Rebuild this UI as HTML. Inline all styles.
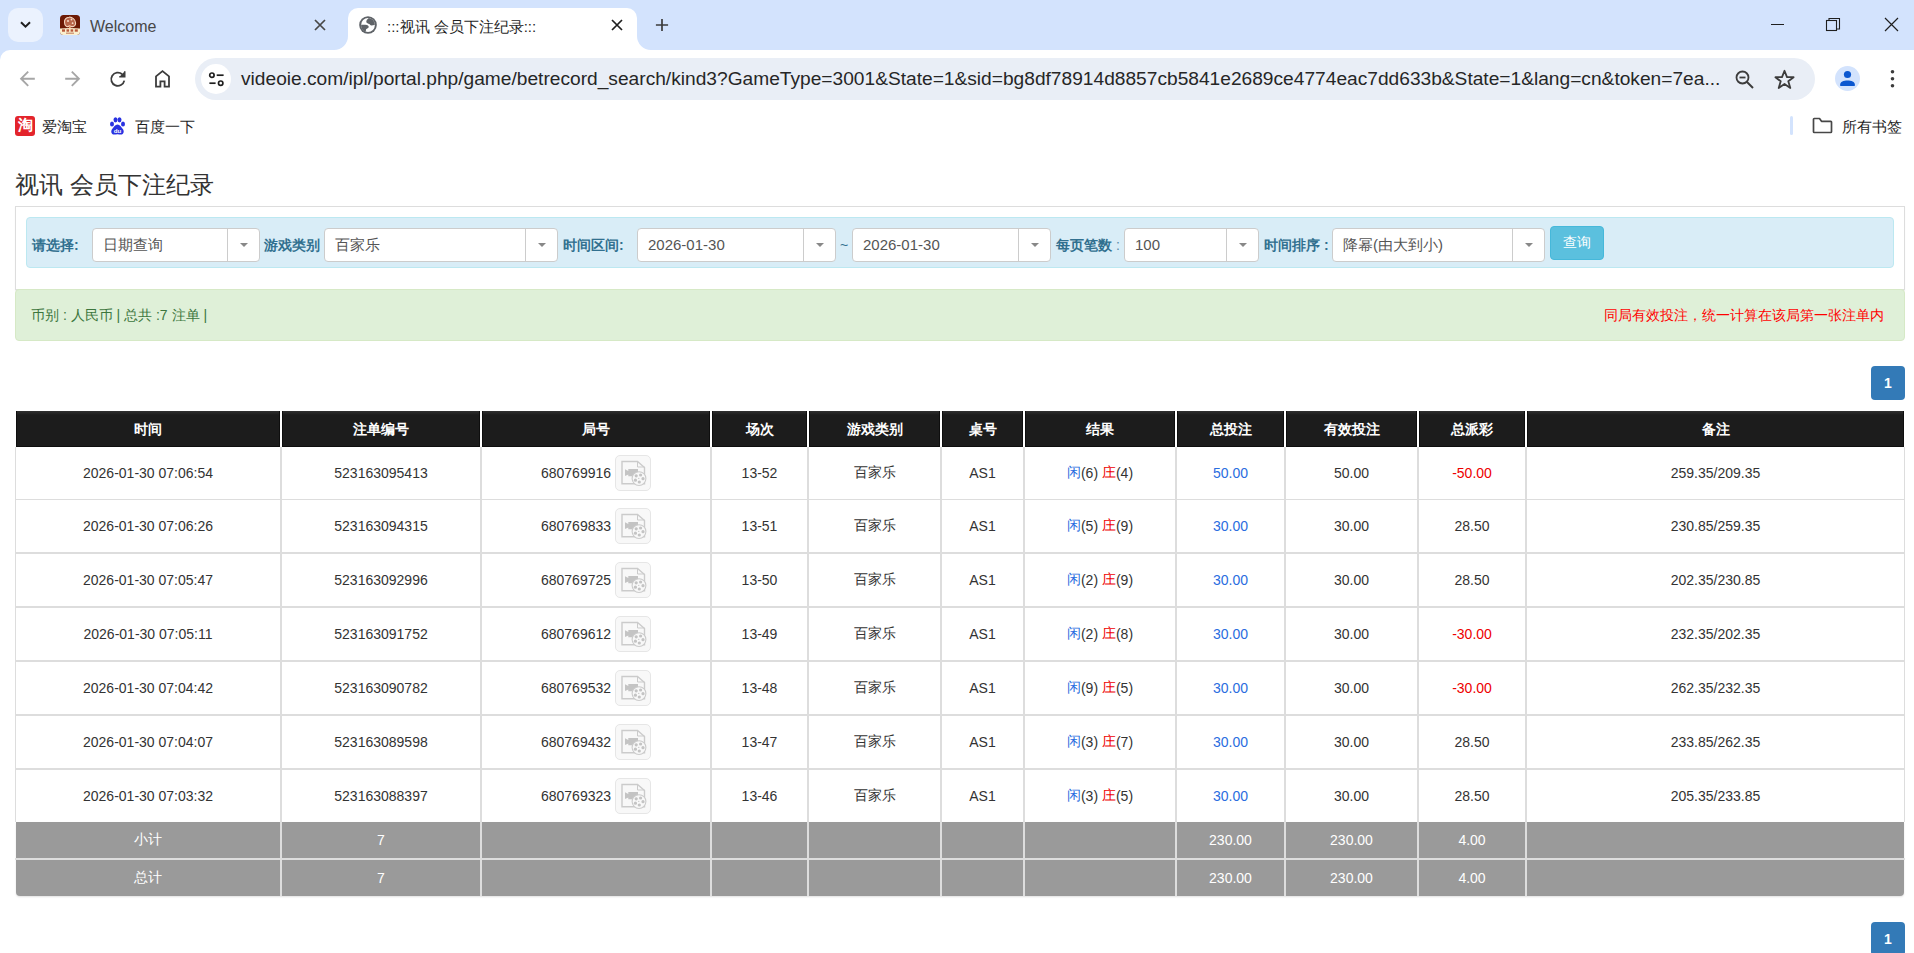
<!DOCTYPE html><html><head><meta charset="utf-8"><style>
*{box-sizing:border-box;margin:0;padding:0}
html,body{width:1914px;height:953px;overflow:hidden;background:#fff;font-family:"Liberation Sans",sans-serif;color:#333}
.a{position:absolute}
.c{position:absolute;display:flex;align-items:center;justify-content:center;white-space:nowrap}
.ui{color:#1f1f1f;white-space:nowrap}
.sel{position:absolute;background:#fff;border:1px solid #ccc;border-radius:4px;height:34px;top:228px}
.sel .t{position:absolute;left:10px;top:7px;font-size:15px;color:#555;white-space:nowrap}
.sel .d{position:absolute;top:0;bottom:0;width:1px;background:#ccc}
.sel .ar{position:absolute;top:14px;width:0;height:0;border-left:4px solid transparent;border-right:4px solid transparent;border-top:4px solid #888}
.lb{position:absolute;top:236.5px;font-size:14px;font-weight:bold;color:#31708f;white-space:nowrap}
.hd{position:absolute;top:411px;height:36px;background:linear-gradient(#303030 0,#1c1c1c 4px,#1c1c1c 100%);color:#fff;font-weight:bold;font-size:14px;display:flex;align-items:center;justify-content:center;padding-top:2px;box-shadow:inset 1px 0 0 #0e0e0e,inset -1px 0 0 #0e0e0e,inset 0 -1px 0 #0e0e0e}
.cell{position:absolute;display:flex;align-items:center;justify-content:center;font-size:14px;color:#333;white-space:nowrap}
.cell>span{display:inline-flex;align-items:center;white-space:pre}
.ft{position:absolute;display:flex;align-items:center;justify-content:center;font-size:14px;color:#fff;white-space:nowrap}
.blue{color:#2a6de0}
.red{color:#e00}
.ico{display:inline-block;width:36px;height:36px;border:1px solid #e6e6e6;border-radius:5px;background:#f8f8f8;margin-left:4px;position:relative}
</style></head><body>
<div class="a" style="left:0;top:0;width:1914px;height:64px;background:#d3e3fd"></div>
<div class="a" style="left:8px;top:8px;width:35px;height:34px;border-radius:10px;background:#ebf2fe"></div>
<svg class="a" style="left:17px;top:16px" width="17" height="17" viewBox="0 0 17 17"><path d="M4 6.2 L8.5 10.7 L13 6.2" fill="none" stroke="#1f1f1f" stroke-width="2"/></svg>
<svg class="a" style="left:60px;top:15px" width="20" height="20" viewBox="0 0 20 20"><defs><clipPath id="fc"><rect x="0" y="0" width="20" height="20" rx="3.5"/></clipPath></defs><g clip-path="url(#fc)"><rect x="0" y="0" width="20" height="20" fill="#6c1a05"/><path d="M0 13.6Q10 12.6 20 13.6V20H0Z" fill="#fbf0cf"/><rect x="2" y="14.3" width="3" height="2.4" fill="#b85a3c"/><rect x="6.5" y="14.3" width="2.6" height="2.4" fill="#b85a3c"/><rect x="10.6" y="14.3" width="2.6" height="2.4" fill="#b85a3c"/><rect x="14.8" y="14.3" width="3" height="2.4" fill="#b85a3c"/><rect x="6" y="17.6" width="8" height="1.2" fill="#c98a6a"/><path d="M4.5 7.5C4.2 4.8 6 2.5 9 2.2C12 1.8 15.5 4.5 15.6 8C15.7 10.5 13.8 12 11.5 11.6C10.5 11.4 10 11 9.6 10.8C8.5 11.6 6.8 11.8 5.8 10.9C5 10.2 4.6 9 4.5 7.5Z" fill="#b8664a" stroke="#f2d3bd" stroke-width="1.1"/><circle cx="8" cy="6" r="1" fill="#f5dccb"/><circle cx="11.5" cy="4.5" r="0.9" fill="#f5dccb"/><circle cx="12.6" cy="8.2" r="0.9" fill="#f5dccb"/><path d="M9.3 11L10.3 11L11 13.2H8.6Z" fill="#eea97c"/></g></svg>
<div class="a ui" style="left:90px;top:18px;font-size:16px;color:#474747">Welcome</div>
<svg class="a" style="left:313px;top:18px" width="14" height="14" viewBox="0 0 14 14"><path d="M2 2L12 12M12 2L2 12" stroke="#474747" stroke-width="1.7"/></svg>
<div class="a" style="left:348px;top:8px;width:289px;height:42px;background:#fff;border-radius:10px 10px 0 0"></div>
<svg class="a" style="left:334px;top:36px" width="14" height="14" viewBox="0 0 14 14"><path d="M0 14 A14 14 0 0 0 14 0 L14 14 Z" fill="#fff"/></svg>
<svg class="a" style="left:637px;top:36px" width="14" height="14" viewBox="0 0 14 14"><path d="M14 14 A14 14 0 0 1 0 0 L0 14 Z" fill="#fff"/></svg>
<svg class="a" style="left:359px;top:16px" width="18" height="18" viewBox="0 0 18 18"><circle cx="9" cy="9" r="8.8" fill="#5f6368"/><circle cx="9" cy="9" r="6.9" fill="#fff"/><path d="M9.8 2.1C8.3 3.2 7.2 4.6 7.3 6C7.5 7.3 9.3 7.4 10.3 8.1C11.2 8.8 11.3 9.6 12.4 9.6C13.6 9.6 14.7 9.1 15.9 8.8A6.9 6.9 0 0 0 9.8 2.1Z" fill="#5f6368"/><path d="M2.1 8.8C4 8.6 6.2 8.6 8 9.1C9.4 9.5 9.9 10.5 9.6 11.4C9.2 12.3 7.3 12.3 7 13.5C6.8 14.4 6.9 15.1 7 15.7A6.9 6.9 0 0 1 2.1 8.8Z" fill="#5f6368"/></svg>
<div class="a ui" style="left:387px;top:17.5px;font-size:15px;color:#1f1f1f">:::视讯 会员下注纪录:::</div>
<svg class="a" style="left:610px;top:18px" width="14" height="14" viewBox="0 0 14 14"><path d="M2 2L12 12M12 2L2 12" stroke="#1f1f1f" stroke-width="1.7"/></svg>
<svg class="a" style="left:653px;top:16px" width="18" height="18" viewBox="0 0 18 18"><path d="M9 2.9V15.1M2.9 9H15.1" stroke="#3c3c3c" stroke-width="1.7"/></svg>
<div class="a" style="left:1771px;top:24px;width:13px;height:1px;background:#1f1f1f"></div>
<svg class="a" style="left:1825px;top:17px" width="16" height="16" viewBox="0 0 16 16"><rect x="1.5" y="3.5" width="10" height="10" fill="none" stroke="#1f1f1f" stroke-width="1.1"/><path d="M4 3.5V1.5H14.5V12H11.5" fill="none" stroke="#1f1f1f" stroke-width="1.1"/></svg>
<svg class="a" style="left:1884px;top:17px" width="15" height="15" viewBox="0 0 15 15"><path d="M1 1L14 14M14 1L1 14" stroke="#1f1f1f" stroke-width="1.2"/></svg>
<div class="a" style="left:0;top:50px;width:1914px;height:98px;background:#fff;border-top-left-radius:10px"></div>
<svg class="a" style="left:19px;top:70px" width="17" height="17" viewBox="0 0 17 17"><path d="M15.8 8.7H2.6M9.2 1.6L2.1 8.7L9.2 15.8" fill="none" stroke="#a6a6a6" stroke-width="1.9"/></svg>
<svg class="a" style="left:64px;top:70px" width="17" height="17" viewBox="0 0 17 17"><path d="M1.2 8.7H14.4M7.8 1.6L14.9 8.7L7.8 15.8" fill="none" stroke="#a6a6a6" stroke-width="1.9"/></svg>
<svg class="a" style="left:109px;top:70px" width="18" height="18" viewBox="0 0 18 18"><path d="M15.3 10.6A6.6 6.6 0 1 1 13.2 4.3" fill="none" stroke="#3c3c3c" stroke-width="1.8"/><path d="M15.8 1.2V6.9H10.2Z" fill="#3c3c3c"/><path d="M15.8 1.2V6.9H10.2" fill="none" stroke="#3c3c3c" stroke-width="1.4"/></svg>
<svg class="a" style="left:154px;top:69px" width="17" height="19" viewBox="0 0 17 19"><path d="M2 17.7V7.4L8.5 2.1L15 7.4V17.7H10.6V12.3H6.4V17.7Z" fill="none" stroke="#3c3c3c" stroke-width="1.8" stroke-linejoin="miter"/></svg>
<div class="a" style="left:195px;top:58px;width:1620px;height:42px;border-radius:21px;background:#e9eef6"></div>
<div class="a" style="left:201px;top:64px;width:30px;height:30px;border-radius:15px;background:#fff"></div>
<svg class="a" style="left:207px;top:71px" width="18" height="17" viewBox="0 0 18 17"><circle cx="4.9" cy="4.2" r="2.2" fill="none" stroke="#1f1f1f" stroke-width="1.7"/><path d="M9.7 4.2H16.6" stroke="#1f1f1f" stroke-width="1.7"/><circle cx="13.7" cy="12.2" r="2.2" fill="none" stroke="#1f1f1f" stroke-width="1.7"/><path d="M2.4 12.2H8.6" stroke="#1f1f1f" stroke-width="1.7"/></svg>
<div class="a ui" style="left:241px;top:68px;font-size:19.17px;color:#262626;line-height:22px">videoie.com/ipl/portal.php/game/betrecord_search/kind3?GameType=3001&amp;State=1&amp;sid=bg8df78914d8857cb5841e2689ce4774eac7dd633b&amp;State=1&amp;lang=cn&amp;token=7ea...</div>
<svg class="a" style="left:1735px;top:70px" width="20" height="20" viewBox="0 0 20 20"><circle cx="7.5" cy="7.5" r="6" fill="none" stroke="#3c3c3c" stroke-width="1.8"/><path d="M4.5 7.5H10.5" stroke="#3c3c3c" stroke-width="1.8"/><path d="M12 12L18 18" stroke="#3c3c3c" stroke-width="2"/></svg>
<svg class="a" style="left:1774px;top:69px" width="21" height="21" viewBox="0 0 21 21"><path d="M10.5 1.8L13 8.2H19.6L14.3 12.3L16.3 19L10.5 15L4.7 19L6.7 12.3L1.4 8.2H8Z" fill="none" stroke="#3c3c3c" stroke-width="1.8" stroke-linejoin="round"/></svg>
<div class="a" style="left:1835px;top:66px;width:25px;height:25px;border-radius:13px;background:#d3e3fd"></div>
<svg class="a" style="left:1838px;top:69px" width="19" height="19" viewBox="0 0 19 19"><circle cx="9.5" cy="5.5" r="3.6" fill="#0b57d0"/><path d="M2.2 16.9V15.2C2.2 12.8 5.5 11.4 9.5 11.4C13.5 11.4 16.8 12.8 16.8 15.2V16.9Z" fill="#0b57d0"/></svg>
<svg class="a" style="left:1889px;top:69px" width="7" height="20" viewBox="0 0 7 20"><circle cx="3.5" cy="2.8" r="1.8" fill="#3c3c3c"/><circle cx="3.5" cy="9.8" r="1.8" fill="#3c3c3c"/><circle cx="3.5" cy="16.8" r="1.8" fill="#3c3c3c"/></svg>
<div class="a" style="left:15px;top:116px;width:20px;height:20px;border-radius:3px;background:#e3242b"></div>
<div class="a" style="left:15px;top:114px;width:20px;height:20px;font-size:15px;font-weight:bold;color:#fff;text-align:center;line-height:22px">淘</div>
<div class="a ui" style="left:42px;top:118px;font-size:15px;line-height:18px;color:#1f1f1f">爱淘宝</div>
<svg class="a" style="left:109px;top:117px" width="17" height="18" viewBox="0 0 17 18"><ellipse cx="3" cy="7" rx="2" ry="2.6" fill="#2932e1"/><ellipse cx="6.5" cy="2.8" rx="2" ry="2.6" fill="#2932e1"/><ellipse cx="10.5" cy="2.8" rx="2" ry="2.6" fill="#2932e1"/><ellipse cx="14" cy="7" rx="2" ry="2.6" fill="#2932e1"/><path d="M8.5 7.6C6.2 7.6 4.8 10.2 3.2 12C1.6 13.8 2 17.6 5.2 17.6C7 17.6 7.6 17.2 8.5 17.2C9.4 17.2 10 17.6 11.8 17.6C15 17.6 15.4 13.8 13.8 12C12.2 10.2 10.8 7.6 8.5 7.6Z" fill="#2932e1"/><text x="8.6" y="15.6" font-family="Liberation Sans" font-size="6.2" font-weight="bold" fill="#fff" text-anchor="middle">du</text></svg>
<div class="a ui" style="left:135px;top:118px;font-size:15px;line-height:18px;color:#1f1f1f">百度一下</div>
<div class="a" style="left:1790px;top:116px;width:3px;height:19px;border-radius:1.5px;background:#d3e3fd"></div>
<svg class="a" style="left:1812px;top:117px" width="21" height="17" viewBox="0 0 21 17"><path d="M2.2 1.5H7.5L9.5 4.3H18.8Q19.5 4.3 19.5 5V14.8Q19.5 15.5 18.8 15.5H2.2Q1.5 15.5 1.5 14.8V2.2Q1.5 1.5 2.2 1.5Z" fill="none" stroke="#474747" stroke-width="1.7" stroke-linejoin="round"/></svg>
<div class="a ui" style="left:1842px;top:118px;font-size:15px;line-height:18px;color:#1f1f1f">所有书签</div>
<div class="a" style="left:15px;top:170.5px;font-size:24px;line-height:28px;color:#333;white-space:nowrap">视讯 会员下注纪录</div>
<div class="a" style="left:15px;top:206px;width:1890px;height:84px;border:1px solid #ddd;background:#fff;box-shadow:0 1px 1px rgba(0,0,0,.05)"></div>
<div class="a" style="left:26px;top:217px;width:1868px;height:51px;border:1px solid #bce8f1;border-radius:4px;background:#d9edf7"></div>
<div class="lb" style="left:32px">请选择:</div>
<div class="lb" style="left:264px">游戏类别</div>
<div class="lb" style="left:563px">时间区间:</div>
<div class="lb" style="left:1056px">每页笔数<span style="font-weight:normal;color:#5a8aa6"> :</span></div>
<div class="lb" style="left:1264px">时间排序 :</div>
<div class="lb" style="left:840px;top:237px;font-weight:normal">~</div>
<div class="sel" style="left:92px;width:168px"><div class="t">日期查询</div><div class="d" style="left:134px"></div><div class="ar" style="left:147px"></div></div>
<div class="sel" style="left:324px;width:234px"><div class="t">百家乐</div><div class="d" style="left:200px"></div><div class="ar" style="left:213px"></div></div>
<div class="sel" style="left:637px;width:199px"><div class="t">2026-01-30</div><div class="d" style="left:165px"></div><div class="ar" style="left:178px"></div></div>
<div class="sel" style="left:852px;width:199px"><div class="t">2026-01-30</div><div class="d" style="left:165px"></div><div class="ar" style="left:178px"></div></div>
<div class="sel" style="left:1124px;width:135px"><div class="t">100</div><div class="d" style="left:101px"></div><div class="ar" style="left:114px"></div></div>
<div class="sel" style="left:1332px;width:213px"><div class="t">降幂(由大到小)</div><div class="d" style="left:179px"></div><div class="ar" style="left:192px"></div></div>
<div class="a" style="left:1550px;top:226px;width:54px;height:34px;border:1px solid #46b8da;border-radius:4px;background:#5bc0de;color:#fff;font-size:14px;display:flex;align-items:center;justify-content:center">查询</div>
<div class="a" style="left:15px;top:289px;width:1890px;height:52px;border:1px solid #d6e9c6;border-radius:4px;background:#dff0d8"></div>
<div class="a" style="left:31px;top:306px;font-size:14px;line-height:18px;color:#3c763d;white-space:nowrap">币别 : 人民币 | 总共 :7 注单 |</div>
<div class="a" style="left:1604px;top:306px;font-size:14px;line-height:18px;color:#f00;white-space:nowrap">同局有效投注，统一计算在该局第一张注单内</div>
<div class="a" style="left:1871px;top:366px;width:34px;height:34px;border-radius:4px;background:#337ab7;color:#fff;font-size:14px;font-weight:bold;display:flex;align-items:center;justify-content:center">1</div>
<div class="a" style="left:1871px;top:922px;width:34px;height:34px;border-radius:4px;background:#337ab7;color:#fff;font-size:14px;font-weight:bold;display:flex;align-items:center;justify-content:center">1</div>
<div class="a" style="left:15px;top:447px;width:1890px;height:375px;background:#fff;border-left:1px solid #ddd;border-right:1px solid #ddd"></div>
<div class="hd" style="left:16px;width:264px">时间</div>
<div class="hd" style="left:282px;width:198px">注单编号</div>
<div class="hd" style="left:482px;width:228px">局号</div>
<div class="hd" style="left:712px;width:95px">场次</div>
<div class="hd" style="left:809px;width:131px">游戏类别</div>
<div class="hd" style="left:942px;width:81px">桌号</div>
<div class="hd" style="left:1025px;width:150px">结果</div>
<div class="hd" style="left:1177px;width:107px">总投注</div>
<div class="hd" style="left:1286px;width:131px">有效投注</div>
<div class="hd" style="left:1419px;width:106px">总派彩</div>
<div class="hd" style="left:1527px;width:377px">备注</div>
<div class="a" style="left:15px;top:499px;width:1890px;height:1px;background:#ddd"></div>
<div class="a" style="left:15px;top:552px;width:1890px;height:2px;background:#ddd"></div>
<div class="a" style="left:15px;top:606px;width:1890px;height:2px;background:#ddd"></div>
<div class="a" style="left:15px;top:660px;width:1890px;height:2px;background:#ddd"></div>
<div class="a" style="left:15px;top:714px;width:1890px;height:2px;background:#ddd"></div>
<div class="a" style="left:15px;top:768px;width:1890px;height:2px;background:#ddd"></div>
<div class="a" style="left:280px;top:447px;width:2px;height:375px;background:#ddd"></div>
<div class="a" style="left:480px;top:447px;width:2px;height:375px;background:#ddd"></div>
<div class="a" style="left:710px;top:447px;width:2px;height:375px;background:#ddd"></div>
<div class="a" style="left:807px;top:447px;width:2px;height:375px;background:#ddd"></div>
<div class="a" style="left:940px;top:447px;width:2px;height:375px;background:#ddd"></div>
<div class="a" style="left:1023px;top:447px;width:2px;height:375px;background:#ddd"></div>
<div class="a" style="left:1175px;top:447px;width:2px;height:375px;background:#ddd"></div>
<div class="a" style="left:1284px;top:447px;width:2px;height:375px;background:#ddd"></div>
<div class="a" style="left:1417px;top:447px;width:2px;height:375px;background:#ddd"></div>
<div class="a" style="left:1525px;top:447px;width:2px;height:375px;background:#ddd"></div>
<div class="a" style="left:16px;top:822px;width:1888px;height:74px;background:#9a9a9a;border-radius:0 0 4px 4px;box-shadow:0 1px 2px rgba(0,0,0,.12)"></div>
<div class="a" style="left:15px;top:858px;width:1890px;height:2px;background:#ddd"></div>
<div class="a" style="left:280px;top:822px;width:2px;height:74px;background:#ddd"></div>
<div class="a" style="left:480px;top:822px;width:2px;height:74px;background:#ddd"></div>
<div class="a" style="left:710px;top:822px;width:2px;height:74px;background:#ddd"></div>
<div class="a" style="left:807px;top:822px;width:2px;height:74px;background:#ddd"></div>
<div class="a" style="left:940px;top:822px;width:2px;height:74px;background:#ddd"></div>
<div class="a" style="left:1023px;top:822px;width:2px;height:74px;background:#ddd"></div>
<div class="a" style="left:1175px;top:822px;width:2px;height:74px;background:#ddd"></div>
<div class="a" style="left:1284px;top:822px;width:2px;height:74px;background:#ddd"></div>
<div class="a" style="left:1417px;top:822px;width:2px;height:74px;background:#ddd"></div>
<div class="a" style="left:1525px;top:822px;width:2px;height:74px;background:#ddd"></div>
<div class="cell" style="left:16px;top:447px;width:264px;height:52px"><span>2026-01-30 07:06:54</span></div>
<div class="cell" style="left:282px;top:447px;width:198px;height:52px"><span>523163095413</span></div>
<div class="cell" style="left:482px;top:447px;width:228px;height:52px"><span>680769916<span class="ico"><svg width="36" height="36" viewBox="0 0 36 36" style="position:absolute;left:-1px;top:-1px"><path d="M7 6.5H22.5L29.5 12.5V28.8H7Z" fill="none" stroke="#cbcbcb" stroke-width="1.4"/><path d="M22.5 6.5V12H29.5" fill="none" stroke="#cbcbcb" stroke-width="1"/><path d="M10 14.3L13.3 16V14H23V21.2H13.3V19.4L10 21Z" fill="#c4c4c4"/><circle cx="24" cy="23.6" r="6.9" fill="#f8f8f8" stroke="#cbcbcb" stroke-width="1.1"/><circle cx="21.2" cy="20.8" r="1.6" fill="#c4c4c4"/><circle cx="25.6" cy="20" r="1.6" fill="#c4c4c4"/><circle cx="28" cy="23.7" r="1.6" fill="#c4c4c4"/><circle cx="24.3" cy="27" r="1.6" fill="#c4c4c4"/><circle cx="20.4" cy="25.2" r="1.6" fill="#c4c4c4"/><circle cx="23.8" cy="23.4" r="0.6" fill="#c4c4c4"/></svg></span></span></div>
<div class="cell" style="left:712px;top:447px;width:95px;height:52px"><span>13-52</span></div>
<div class="cell" style="left:809px;top:447px;width:131px;height:52px"><span>百家乐</span></div>
<div class="cell" style="left:942px;top:447px;width:81px;height:52px"><span>AS1</span></div>
<div class="cell" style="left:1025px;top:447px;width:150px;height:52px"><span><span class="blue">闲</span>(6) <span class="red">庄</span>(4)</span></div>
<div class="cell" style="left:1177px;top:447px;width:107px;height:52px"><span><span class="blue">50.00</span></span></div>
<div class="cell" style="left:1286px;top:447px;width:131px;height:52px"><span>50.00</span></div>
<div class="cell" style="left:1419px;top:447px;width:106px;height:52px"><span><span class="red">-50.00</span></span></div>
<div class="cell" style="left:1527px;top:447px;width:377px;height:52px"><span>259.35/209.35</span></div>
<div class="cell" style="left:16px;top:500px;width:264px;height:52px"><span>2026-01-30 07:06:26</span></div>
<div class="cell" style="left:282px;top:500px;width:198px;height:52px"><span>523163094315</span></div>
<div class="cell" style="left:482px;top:500px;width:228px;height:52px"><span>680769833<span class="ico"><svg width="36" height="36" viewBox="0 0 36 36" style="position:absolute;left:-1px;top:-1px"><path d="M7 6.5H22.5L29.5 12.5V28.8H7Z" fill="none" stroke="#cbcbcb" stroke-width="1.4"/><path d="M22.5 6.5V12H29.5" fill="none" stroke="#cbcbcb" stroke-width="1"/><path d="M10 14.3L13.3 16V14H23V21.2H13.3V19.4L10 21Z" fill="#c4c4c4"/><circle cx="24" cy="23.6" r="6.9" fill="#f8f8f8" stroke="#cbcbcb" stroke-width="1.1"/><circle cx="21.2" cy="20.8" r="1.6" fill="#c4c4c4"/><circle cx="25.6" cy="20" r="1.6" fill="#c4c4c4"/><circle cx="28" cy="23.7" r="1.6" fill="#c4c4c4"/><circle cx="24.3" cy="27" r="1.6" fill="#c4c4c4"/><circle cx="20.4" cy="25.2" r="1.6" fill="#c4c4c4"/><circle cx="23.8" cy="23.4" r="0.6" fill="#c4c4c4"/></svg></span></span></div>
<div class="cell" style="left:712px;top:500px;width:95px;height:52px"><span>13-51</span></div>
<div class="cell" style="left:809px;top:500px;width:131px;height:52px"><span>百家乐</span></div>
<div class="cell" style="left:942px;top:500px;width:81px;height:52px"><span>AS1</span></div>
<div class="cell" style="left:1025px;top:500px;width:150px;height:52px"><span><span class="blue">闲</span>(5) <span class="red">庄</span>(9)</span></div>
<div class="cell" style="left:1177px;top:500px;width:107px;height:52px"><span><span class="blue">30.00</span></span></div>
<div class="cell" style="left:1286px;top:500px;width:131px;height:52px"><span>30.00</span></div>
<div class="cell" style="left:1419px;top:500px;width:106px;height:52px"><span>28.50</span></div>
<div class="cell" style="left:1527px;top:500px;width:377px;height:52px"><span>230.85/259.35</span></div>
<div class="cell" style="left:16px;top:554px;width:264px;height:52px"><span>2026-01-30 07:05:47</span></div>
<div class="cell" style="left:282px;top:554px;width:198px;height:52px"><span>523163092996</span></div>
<div class="cell" style="left:482px;top:554px;width:228px;height:52px"><span>680769725<span class="ico"><svg width="36" height="36" viewBox="0 0 36 36" style="position:absolute;left:-1px;top:-1px"><path d="M7 6.5H22.5L29.5 12.5V28.8H7Z" fill="none" stroke="#cbcbcb" stroke-width="1.4"/><path d="M22.5 6.5V12H29.5" fill="none" stroke="#cbcbcb" stroke-width="1"/><path d="M10 14.3L13.3 16V14H23V21.2H13.3V19.4L10 21Z" fill="#c4c4c4"/><circle cx="24" cy="23.6" r="6.9" fill="#f8f8f8" stroke="#cbcbcb" stroke-width="1.1"/><circle cx="21.2" cy="20.8" r="1.6" fill="#c4c4c4"/><circle cx="25.6" cy="20" r="1.6" fill="#c4c4c4"/><circle cx="28" cy="23.7" r="1.6" fill="#c4c4c4"/><circle cx="24.3" cy="27" r="1.6" fill="#c4c4c4"/><circle cx="20.4" cy="25.2" r="1.6" fill="#c4c4c4"/><circle cx="23.8" cy="23.4" r="0.6" fill="#c4c4c4"/></svg></span></span></div>
<div class="cell" style="left:712px;top:554px;width:95px;height:52px"><span>13-50</span></div>
<div class="cell" style="left:809px;top:554px;width:131px;height:52px"><span>百家乐</span></div>
<div class="cell" style="left:942px;top:554px;width:81px;height:52px"><span>AS1</span></div>
<div class="cell" style="left:1025px;top:554px;width:150px;height:52px"><span><span class="blue">闲</span>(2) <span class="red">庄</span>(9)</span></div>
<div class="cell" style="left:1177px;top:554px;width:107px;height:52px"><span><span class="blue">30.00</span></span></div>
<div class="cell" style="left:1286px;top:554px;width:131px;height:52px"><span>30.00</span></div>
<div class="cell" style="left:1419px;top:554px;width:106px;height:52px"><span>28.50</span></div>
<div class="cell" style="left:1527px;top:554px;width:377px;height:52px"><span>202.35/230.85</span></div>
<div class="cell" style="left:16px;top:608px;width:264px;height:52px"><span>2026-01-30 07:05:11</span></div>
<div class="cell" style="left:282px;top:608px;width:198px;height:52px"><span>523163091752</span></div>
<div class="cell" style="left:482px;top:608px;width:228px;height:52px"><span>680769612<span class="ico"><svg width="36" height="36" viewBox="0 0 36 36" style="position:absolute;left:-1px;top:-1px"><path d="M7 6.5H22.5L29.5 12.5V28.8H7Z" fill="none" stroke="#cbcbcb" stroke-width="1.4"/><path d="M22.5 6.5V12H29.5" fill="none" stroke="#cbcbcb" stroke-width="1"/><path d="M10 14.3L13.3 16V14H23V21.2H13.3V19.4L10 21Z" fill="#c4c4c4"/><circle cx="24" cy="23.6" r="6.9" fill="#f8f8f8" stroke="#cbcbcb" stroke-width="1.1"/><circle cx="21.2" cy="20.8" r="1.6" fill="#c4c4c4"/><circle cx="25.6" cy="20" r="1.6" fill="#c4c4c4"/><circle cx="28" cy="23.7" r="1.6" fill="#c4c4c4"/><circle cx="24.3" cy="27" r="1.6" fill="#c4c4c4"/><circle cx="20.4" cy="25.2" r="1.6" fill="#c4c4c4"/><circle cx="23.8" cy="23.4" r="0.6" fill="#c4c4c4"/></svg></span></span></div>
<div class="cell" style="left:712px;top:608px;width:95px;height:52px"><span>13-49</span></div>
<div class="cell" style="left:809px;top:608px;width:131px;height:52px"><span>百家乐</span></div>
<div class="cell" style="left:942px;top:608px;width:81px;height:52px"><span>AS1</span></div>
<div class="cell" style="left:1025px;top:608px;width:150px;height:52px"><span><span class="blue">闲</span>(2) <span class="red">庄</span>(8)</span></div>
<div class="cell" style="left:1177px;top:608px;width:107px;height:52px"><span><span class="blue">30.00</span></span></div>
<div class="cell" style="left:1286px;top:608px;width:131px;height:52px"><span>30.00</span></div>
<div class="cell" style="left:1419px;top:608px;width:106px;height:52px"><span><span class="red">-30.00</span></span></div>
<div class="cell" style="left:1527px;top:608px;width:377px;height:52px"><span>232.35/202.35</span></div>
<div class="cell" style="left:16px;top:662px;width:264px;height:52px"><span>2026-01-30 07:04:42</span></div>
<div class="cell" style="left:282px;top:662px;width:198px;height:52px"><span>523163090782</span></div>
<div class="cell" style="left:482px;top:662px;width:228px;height:52px"><span>680769532<span class="ico"><svg width="36" height="36" viewBox="0 0 36 36" style="position:absolute;left:-1px;top:-1px"><path d="M7 6.5H22.5L29.5 12.5V28.8H7Z" fill="none" stroke="#cbcbcb" stroke-width="1.4"/><path d="M22.5 6.5V12H29.5" fill="none" stroke="#cbcbcb" stroke-width="1"/><path d="M10 14.3L13.3 16V14H23V21.2H13.3V19.4L10 21Z" fill="#c4c4c4"/><circle cx="24" cy="23.6" r="6.9" fill="#f8f8f8" stroke="#cbcbcb" stroke-width="1.1"/><circle cx="21.2" cy="20.8" r="1.6" fill="#c4c4c4"/><circle cx="25.6" cy="20" r="1.6" fill="#c4c4c4"/><circle cx="28" cy="23.7" r="1.6" fill="#c4c4c4"/><circle cx="24.3" cy="27" r="1.6" fill="#c4c4c4"/><circle cx="20.4" cy="25.2" r="1.6" fill="#c4c4c4"/><circle cx="23.8" cy="23.4" r="0.6" fill="#c4c4c4"/></svg></span></span></div>
<div class="cell" style="left:712px;top:662px;width:95px;height:52px"><span>13-48</span></div>
<div class="cell" style="left:809px;top:662px;width:131px;height:52px"><span>百家乐</span></div>
<div class="cell" style="left:942px;top:662px;width:81px;height:52px"><span>AS1</span></div>
<div class="cell" style="left:1025px;top:662px;width:150px;height:52px"><span><span class="blue">闲</span>(9) <span class="red">庄</span>(5)</span></div>
<div class="cell" style="left:1177px;top:662px;width:107px;height:52px"><span><span class="blue">30.00</span></span></div>
<div class="cell" style="left:1286px;top:662px;width:131px;height:52px"><span>30.00</span></div>
<div class="cell" style="left:1419px;top:662px;width:106px;height:52px"><span><span class="red">-30.00</span></span></div>
<div class="cell" style="left:1527px;top:662px;width:377px;height:52px"><span>262.35/232.35</span></div>
<div class="cell" style="left:16px;top:716px;width:264px;height:52px"><span>2026-01-30 07:04:07</span></div>
<div class="cell" style="left:282px;top:716px;width:198px;height:52px"><span>523163089598</span></div>
<div class="cell" style="left:482px;top:716px;width:228px;height:52px"><span>680769432<span class="ico"><svg width="36" height="36" viewBox="0 0 36 36" style="position:absolute;left:-1px;top:-1px"><path d="M7 6.5H22.5L29.5 12.5V28.8H7Z" fill="none" stroke="#cbcbcb" stroke-width="1.4"/><path d="M22.5 6.5V12H29.5" fill="none" stroke="#cbcbcb" stroke-width="1"/><path d="M10 14.3L13.3 16V14H23V21.2H13.3V19.4L10 21Z" fill="#c4c4c4"/><circle cx="24" cy="23.6" r="6.9" fill="#f8f8f8" stroke="#cbcbcb" stroke-width="1.1"/><circle cx="21.2" cy="20.8" r="1.6" fill="#c4c4c4"/><circle cx="25.6" cy="20" r="1.6" fill="#c4c4c4"/><circle cx="28" cy="23.7" r="1.6" fill="#c4c4c4"/><circle cx="24.3" cy="27" r="1.6" fill="#c4c4c4"/><circle cx="20.4" cy="25.2" r="1.6" fill="#c4c4c4"/><circle cx="23.8" cy="23.4" r="0.6" fill="#c4c4c4"/></svg></span></span></div>
<div class="cell" style="left:712px;top:716px;width:95px;height:52px"><span>13-47</span></div>
<div class="cell" style="left:809px;top:716px;width:131px;height:52px"><span>百家乐</span></div>
<div class="cell" style="left:942px;top:716px;width:81px;height:52px"><span>AS1</span></div>
<div class="cell" style="left:1025px;top:716px;width:150px;height:52px"><span><span class="blue">闲</span>(3) <span class="red">庄</span>(7)</span></div>
<div class="cell" style="left:1177px;top:716px;width:107px;height:52px"><span><span class="blue">30.00</span></span></div>
<div class="cell" style="left:1286px;top:716px;width:131px;height:52px"><span>30.00</span></div>
<div class="cell" style="left:1419px;top:716px;width:106px;height:52px"><span>28.50</span></div>
<div class="cell" style="left:1527px;top:716px;width:377px;height:52px"><span>233.85/262.35</span></div>
<div class="cell" style="left:16px;top:770px;width:264px;height:52px"><span>2026-01-30 07:03:32</span></div>
<div class="cell" style="left:282px;top:770px;width:198px;height:52px"><span>523163088397</span></div>
<div class="cell" style="left:482px;top:770px;width:228px;height:52px"><span>680769323<span class="ico"><svg width="36" height="36" viewBox="0 0 36 36" style="position:absolute;left:-1px;top:-1px"><path d="M7 6.5H22.5L29.5 12.5V28.8H7Z" fill="none" stroke="#cbcbcb" stroke-width="1.4"/><path d="M22.5 6.5V12H29.5" fill="none" stroke="#cbcbcb" stroke-width="1"/><path d="M10 14.3L13.3 16V14H23V21.2H13.3V19.4L10 21Z" fill="#c4c4c4"/><circle cx="24" cy="23.6" r="6.9" fill="#f8f8f8" stroke="#cbcbcb" stroke-width="1.1"/><circle cx="21.2" cy="20.8" r="1.6" fill="#c4c4c4"/><circle cx="25.6" cy="20" r="1.6" fill="#c4c4c4"/><circle cx="28" cy="23.7" r="1.6" fill="#c4c4c4"/><circle cx="24.3" cy="27" r="1.6" fill="#c4c4c4"/><circle cx="20.4" cy="25.2" r="1.6" fill="#c4c4c4"/><circle cx="23.8" cy="23.4" r="0.6" fill="#c4c4c4"/></svg></span></span></div>
<div class="cell" style="left:712px;top:770px;width:95px;height:52px"><span>13-46</span></div>
<div class="cell" style="left:809px;top:770px;width:131px;height:52px"><span>百家乐</span></div>
<div class="cell" style="left:942px;top:770px;width:81px;height:52px"><span>AS1</span></div>
<div class="cell" style="left:1025px;top:770px;width:150px;height:52px"><span><span class="blue">闲</span>(3) <span class="red">庄</span>(5)</span></div>
<div class="cell" style="left:1177px;top:770px;width:107px;height:52px"><span><span class="blue">30.00</span></span></div>
<div class="cell" style="left:1286px;top:770px;width:131px;height:52px"><span>30.00</span></div>
<div class="cell" style="left:1419px;top:770px;width:106px;height:52px"><span>28.50</span></div>
<div class="cell" style="left:1527px;top:770px;width:377px;height:52px"><span>205.35/233.85</span></div>
<div class="ft" style="left:16px;top:822px;width:264px;height:36px">小计</div>
<div class="ft" style="left:282px;top:822px;width:198px;height:36px">7</div>
<div class="ft" style="left:1177px;top:822px;width:107px;height:36px">230.00</div>
<div class="ft" style="left:1286px;top:822px;width:131px;height:36px">230.00</div>
<div class="ft" style="left:1419px;top:822px;width:106px;height:36px">4.00</div>
<div class="ft" style="left:16px;top:860px;width:264px;height:36px">总计</div>
<div class="ft" style="left:282px;top:860px;width:198px;height:36px">7</div>
<div class="ft" style="left:1177px;top:860px;width:107px;height:36px">230.00</div>
<div class="ft" style="left:1286px;top:860px;width:131px;height:36px">230.00</div>
<div class="ft" style="left:1419px;top:860px;width:106px;height:36px">4.00</div>
</body></html>
